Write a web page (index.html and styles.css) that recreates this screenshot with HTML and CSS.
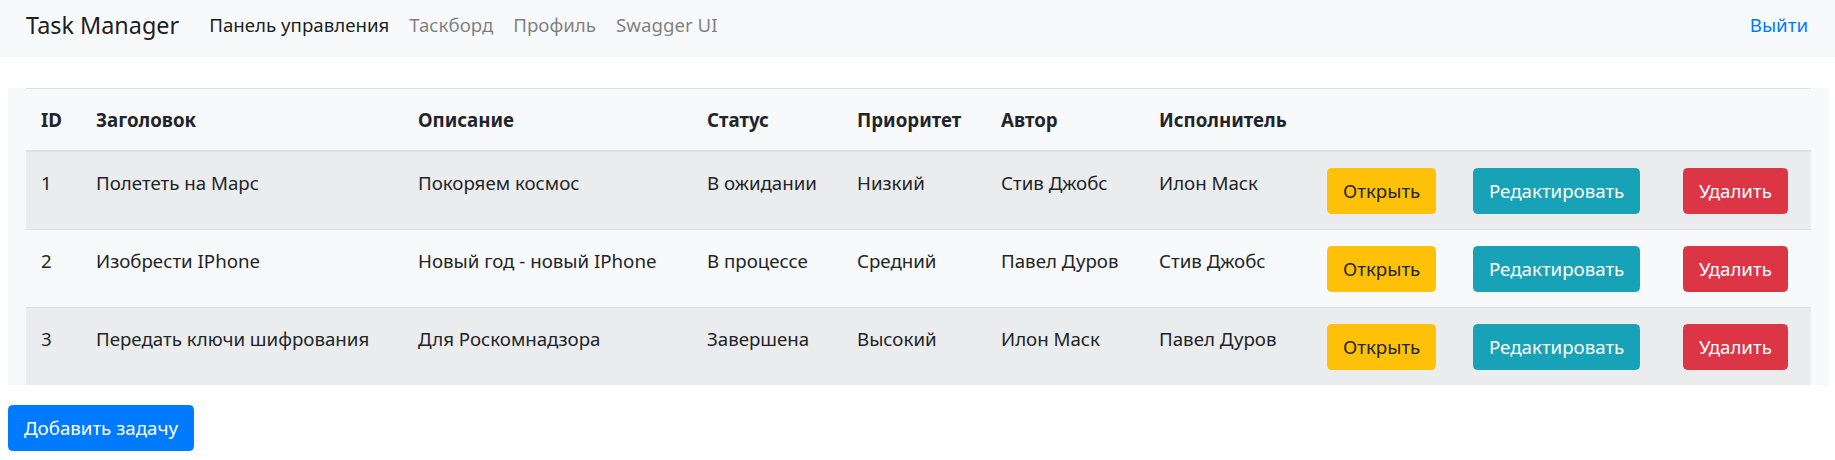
FILE: index.html
```html
<!DOCTYPE html>
<html lang="ru">
<head>
<meta charset="utf-8">
<title>Task Manager</title>
<link rel="stylesheet" href="styles.css">
</head>
<body>
<nav class="navbar">
  <a class="brand" href="#">Task Manager</a>
  <ul class="nav-links">
    <li><a class="nav-link active" href="#">Панель управления</a></li>
    <li><a class="nav-link" href="#">Таскборд</a></li>
    <li><a class="nav-link" href="#">Профиль</a></li>
    <li><a class="nav-link" href="#">Swagger UI</a></li>
  </ul>
  <a class="logout" href="#">Выйти</a>
</nav>
<main class="main">
  <div class="table-box">
    <table class="table">
      <colgroup>
        <col class="c-id"><col class="c-title"><col class="c-desc"><col class="c-status"><col class="c-prio"><col class="c-author"><col class="c-exec"><col class="c-open"><col class="c-edit"><col class="c-del">
      </colgroup>
      <thead>
        <tr>
          <th>ID</th><th>Заголовок</th><th>Описание</th><th>Статус</th><th>Приоритет</th><th>Автор</th><th>Исполнитель</th><th></th><th></th><th></th>
        </tr>
      </thead>
      <tbody>
        <tr>
          <td>1</td><td>Полететь на Марс</td><td>Покоряем космос</td><td>В ожидании</td><td>Низкий</td><td>Стив Джобс</td><td>Илон Маск</td>
          <td class="act"><button class="btn btn-warning">Открыть</button></td>
          <td class="act"><button class="btn btn-info">Редактировать</button></td>
          <td class="act"><button class="btn btn-danger">Удалить</button></td>
        </tr>
        <tr>
          <td>2</td><td>Изобрести IPhone</td><td>Новый год - новый IPhone</td><td>В процессе</td><td>Средний</td><td>Павел Дуров</td><td>Стив Джобс</td>
          <td class="act"><button class="btn btn-warning">Открыть</button></td>
          <td class="act"><button class="btn btn-info">Редактировать</button></td>
          <td class="act"><button class="btn btn-danger">Удалить</button></td>
        </tr>
        <tr>
          <td>3</td><td>Передать ключи шифрования</td><td>Для Роскомнадзора</td><td>Завершена</td><td>Высокий</td><td>Илон Маск</td><td>Павел Дуров</td>
          <td class="act"><button class="btn btn-warning">Открыть</button></td>
          <td class="act"><button class="btn btn-info">Редактировать</button></td>
          <td class="act"><button class="btn btn-danger">Удалить</button></td>
        </tr>
      </tbody>
    </table>
  </div>
  <button class="btn btn-primary add-btn">Добавить задачу</button>
</main>
</body>
</html>
```
FILE: styles.css
```css
* { box-sizing: border-box; }
html, body { margin: 0; padding: 0; }
body {
  font-family: "Noto Sans", "Open Sans", sans-serif;
  font-size: 18.7px;
  line-height: 28px;
  color: #212529;
  background: #fff;
}
.navbar {
  display: flex;
  align-items: center;
  height: 57px;
  padding: 0 27px 7px 26px;
  background: #f8f9fa;
}
.brand {
  font-size: 23.4px;
  line-height: 34px;
  color: rgba(0,0,0,.9);
  text-decoration: none;
  margin-right: 30px;
}
.nav-links {
  display: flex;
  gap: 20px;
  list-style: none;
  margin: 0;
  padding: 0;
  flex: 1;
}
.nav-link {
  color: rgba(0,0,0,.5);
  text-decoration: none;
}
.nav-link.active { color: rgba(0,0,0,.9); }
.logout {
  color: #007bff;
  text-decoration: none;
}
.main {
  padding: 31px 6px 0 8px;
}
.table-box {
  background: #f8f9fa;
  padding: 0 18px;
}
.table {
  width: 100%;
  border-collapse: collapse;
  table-layout: fixed;
}
.c-id { width: 55px; }
.c-title { width: 322px; }
.c-desc { width: 289px; }
.c-status { width: 150px; }
.c-prio { width: 144px; }
.c-author { width: 158px; }
.c-exec { width: 168px; }
.c-open { width: 146px; }
.c-edit { width: 210px; }
.table th {
  text-align: left;
  font-weight: 700;
  padding: 17px 15px 16px;
  border-top: 1px solid #dee2e6;
  border-bottom: 2px solid #dee2e6;
  white-space: nowrap;
}
.table td {
  padding: 17px 15px 14px;
  vertical-align: top;
  border-top: 1px solid #dee2e6;
  white-space: nowrap;
}
.table td.act { padding: 16px 15px 15px; }
.table tbody tr:nth-child(odd) { background: rgba(0,0,0,.05); }
.btn {
  display: inline-block;
  font-family: inherit;
  font-size: 18.7px;
  line-height: 28px;
  padding: 8px 15px;
  border: 1px solid transparent;
  border-radius: 4.5px;
  cursor: pointer;
  vertical-align: top;
}
.btn-warning { background: #ffc107; border-color: #ffc107; color: #212529; }
.btn-info { background: #17a2b8; border-color: #17a2b8; color: #fff; }
.btn-danger { background: #dc3545; border-color: #dc3545; color: #fff; }
.btn-primary { background: #007bff; border-color: #007bff; color: #fff; }
.add-btn { margin-top: 20px; }
```
